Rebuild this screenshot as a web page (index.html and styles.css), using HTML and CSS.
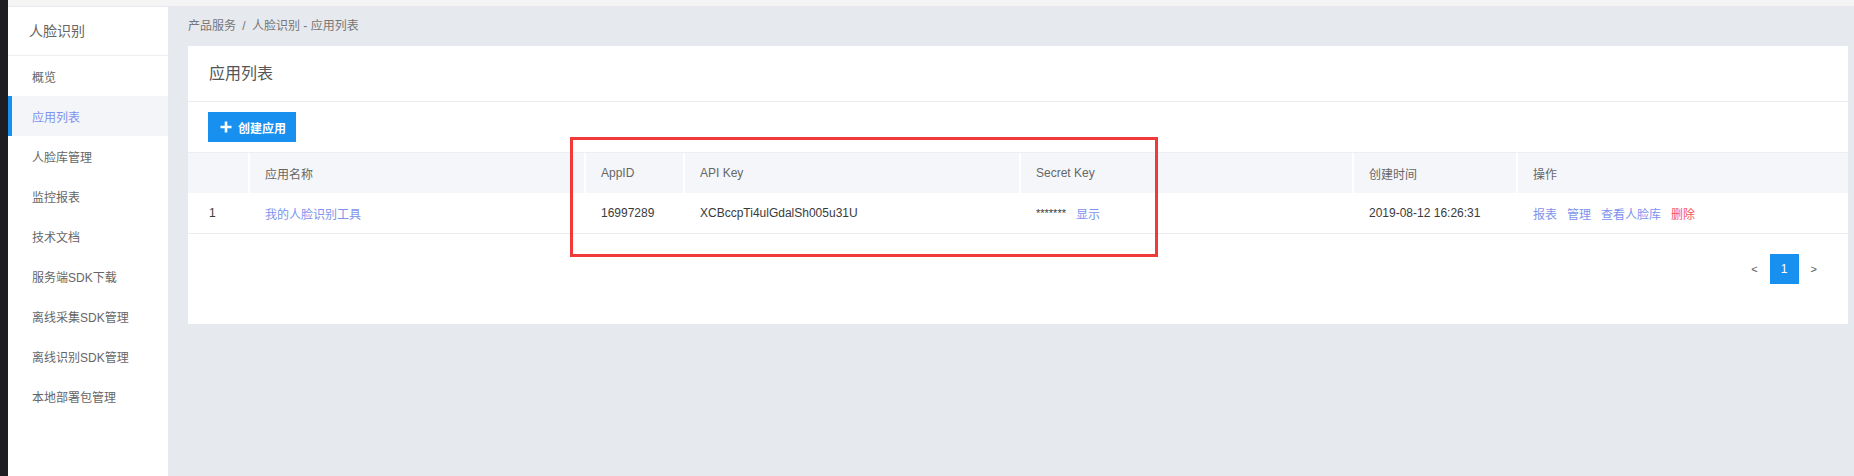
FILE: index.html
```html
<!DOCTYPE html>
<html lang="zh">
<head>
<meta charset="utf-8">
<title>应用列表</title>
<link rel="stylesheet" href="styles.css">
</head>
<body>
<div class="app">
  <div class="dark-strip"></div>
  <div class="frame">
    <div class="top-strip"></div>
    <div class="layout">
      <aside class="sidebar">
        <div class="side-title">人脸识别</div>
        <ul class="menu">
          <li>概览</li>
          <li class="active">应用列表</li>
          <li>人脸库管理</li>
          <li>监控报表</li>
          <li>技术文档</li>
          <li>服务端SDK下载</li>
          <li>离线采集SDK管理</li>
          <li>离线识别SDK管理</li>
          <li>本地部署包管理</li>
        </ul>
      </aside>
      <main class="main">
        <div class="breadcrumb">产品服务 <span class="sep">/</span> 人脸识别 - 应用列表</div>
        <section class="card">
          <div class="card-head">应用列表</div>
          <div class="toolbar">
            <button class="btn-create"><svg class="plus" width="12" height="12" viewBox="0 0 12 12"><path d="M6 0.5v11M0.5 6h11" stroke="#fff" stroke-width="2.6"/></svg>创建应用</button>
          </div>
          <div class="table">
            <div class="tr thead">
              <div class="c c1"></div>
              <div class="c c2">应用名称</div>
              <div class="c c3">AppID</div>
              <div class="c c4">API Key</div>
              <div class="c c5">Secret Key</div>
              <div class="c c6">创建时间</div>
              <div class="c c7">操作</div>
            </div>
            <div class="tr tbody">
              <div class="c c1">1</div>
              <div class="c c2"><span class="link">我的人脸识别工具</span></div>
              <div class="c c3">16997289</div>
              <div class="c c4">XCBccpTi4ulGdalSh005u31U</div>
              <div class="c c5"><span class="stars">*******</span><span class="link">显示</span></div>
              <div class="c c6">2019-08-12 16:26:31</div>
              <div class="c c7"><span class="link">报表</span><span class="link">管理</span><span class="link">查看人脸库</span><span class="danger">删除</span></div>
            </div>
          </div>
          <div class="pager">
            <span class="pg-arrow">&lt;</span>
            <span class="pg-num">1</span>
            <span class="pg-arrow">&gt;</span>
          </div>
          <div class="highlight"></div>
        </section>
      </main>
    </div>
  </div>
</div>
</body>
</html>
```
FILE: styles.css
```css
* { box-sizing: border-box; }
html, body { margin: 0; padding: 0; }
body {
  font-family: "Liberation Sans", "Noto Sans CJK SC", sans-serif;
  font-size: 12px;
  color: #333;
  background: #e6e9ee;
}
.app { display: flex; height: 476px; overflow: hidden; }
.dark-strip { width: 8px; background: #1d1d22; flex: none; }
.frame { flex: 1; display: flex; flex-direction: column; }
.top-strip { height: 7px; background: #f4f4f5; border-bottom: 1px solid #e8e8ee; flex: none; }
.layout { flex: 1; display: flex; }
.sidebar { width: 160px; background: #fff; flex: none; }
.side-title {
  height: 49px; line-height: 49px; padding-left: 21px;
  font-size: 14px; color: #666; border-bottom: 1px solid #eceef2;
}
.menu { list-style: none; margin: 0; padding: 0; }
.menu li {
  height: 40px; line-height: 44px; overflow: hidden;
  color: #666; font-size: 12px; border-left: 4px solid transparent;
  padding-left: 20px;
}
.menu li.active { background: #f4f5f9; border-left-color: #1890f0; color: #7e93ee; }
.main { flex: 1; padding: 0 6px 0 20px; }
.breadcrumb { height: 39px; line-height: 38px; color: #777; font-size: 12px; }
.breadcrumb .sep { margin: 0 3px; }
.card { position: relative; background: #fff; height: 278px; }
.card-head {
  height: 56px; line-height: 56px; padding-left: 21px;
  font-size: 16px; color: #555; border-bottom: 1px solid #e9ebf0;
}
.toolbar { padding: 10px 20px; }
.btn-create {
  display: flex; align-items: center; height: 30px; width: 88px;
  padding: 0 0 0 12px; border: 0; background: #1890f0; color: #fff;
  font-family: inherit; font-size: 12px; font-weight: bold;
}
.btn-create .plus { margin-right: 6px; flex: none; }
.table { border-top: 1px solid #eceef2; }
.tr { display: flex; }
.thead { height: 40px; background: #f5f6fa; color: #666; }
.tbody { height: 41px; border-bottom: 1px solid #eaecf0; color: #3a3a3a; }
.c { display: flex; align-items: center; padding-left: 15px; white-space: nowrap; flex: none; }
.thead .c + .c { border-left: 2px solid #fff; }
.tbody .c + .c { border-left: 2px solid transparent; }
.c1 { width: 60px; padding-left: 21px; }
.c2 { width: 336px; }
.c3 { width: 99px; }
.c4 { width: 336px; }
.c5 { width: 333px; }
.c6 { width: 164px; }
.c7 { flex: 1; }
.link { color: #7e93ee; }
.danger { color: #f5555b; }
.c7 span { margin-right: 10px; }
.stars { margin-right: 10px; font-size: 11px; }
.pager {
  display: flex; justify-content: flex-end; align-items: center;
  padding: 20px 31px 0 0; gap: 12px;
}
.pg-num {
  width: 29px; height: 30px; background: #1890f0; color: #fff;
  display: flex; align-items: center; justify-content: center; font-size: 12px;
}
.pg-arrow { color: #555; font-size: 11px; }
.highlight {
  position: absolute; left: 382px; top: 91px; width: 588px; height: 120px;
  border: 3px solid #f03a3a;
}
```
